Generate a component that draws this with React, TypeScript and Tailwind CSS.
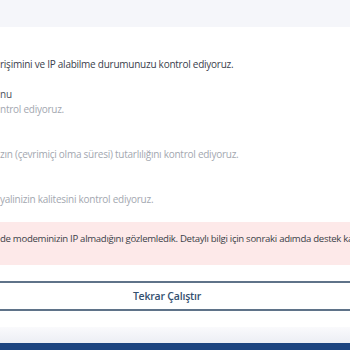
import React from "react";

const font = { fontFamily: '"Open Sans", "Noto Sans", sans-serif' };

export default function App() {
  return (
    <div
      className="w-[350px] h-[350px] overflow-hidden bg-white flex flex-col text-[10px] leading-[15px] tracking-[-0.25px]"
      style={font}
    >
      <div className="h-[27px] shrink-0 bg-[#f5f6fa]" />
      <div className="flex flex-col whitespace-nowrap">
        <p className="mt-[30px] text-[#3a404c]">
          rişimini ve IP alabilme durumunuzu kontrol ediyoruz.
        </p>
        <p className="mt-[15px] text-[#4a505c]">nu</p>
        <p className="text-[#a3a7b0]">ntrol ediyoruz.</p>
        <p className="mt-[30px] text-[#a3a7b0]">
          zın (çevrimiçi olma süresi) tutarlılığını kontrol ediyoruz.
        </p>
        <p className="mt-[30px] text-[#a3a7b0]">
          yalinizin kalitesini kontrol ediyoruz.
        </p>
      </div>
      <div className="mt-[15px] h-[43px] shrink-0 bg-[#fde9e9] pt-[9px] whitespace-nowrap text-[9.6px] tracking-[-0.3px] text-[#3b3f48]">
        de modeminizin IP almadığını gözlemledik. Detaylı bilgi için sonraki adımda destek kaydı
      </div>
      <button className="mt-[16px] -ml-[20px] -mr-[4px] h-[30px] shrink-0 border-y-2 border-[#5f7389] bg-white flex items-center justify-center font-semibold text-[10.5px] tracking-[-0.2px] text-[#34506f]">
        Tekrar Çalıştır
      </button>
      <div className="mt-[16px] h-[16px] shrink-0 bg-gradient-to-b from-[#fafafc] to-[#eceef4]" />
      <div className="flex-1 bg-[#1c4480]" />
    </div>
  );
}
